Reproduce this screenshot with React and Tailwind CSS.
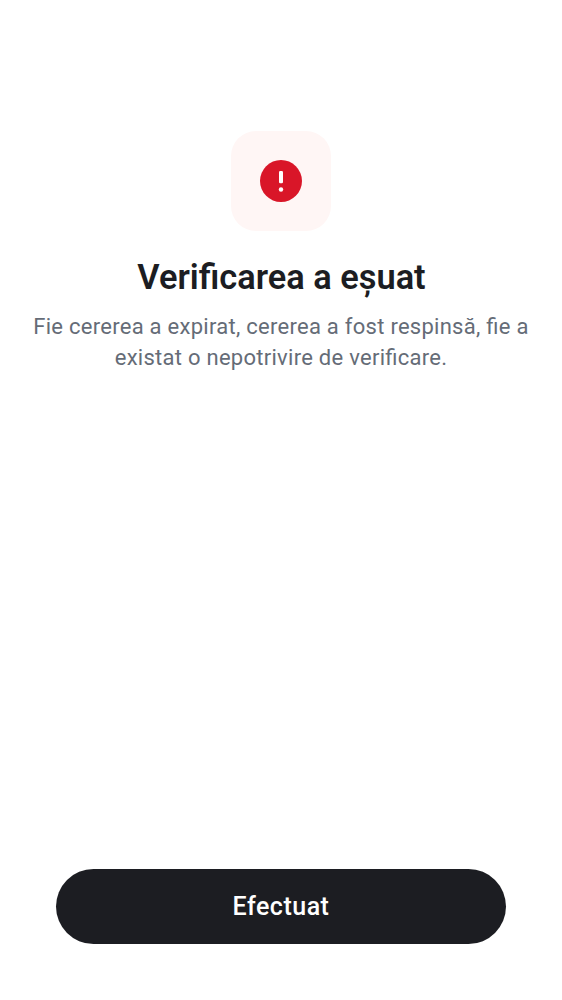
export default function App() {
  return (
    <main className="flex h-[1000px] w-[562px] flex-col items-center bg-white pt-[131px] pb-14 font-['Roboto',sans-serif]">
      <div className="flex size-[100px] items-center justify-center rounded-[25px] bg-[#fff6f5]">
        <svg className="size-[42px]" viewBox="0 0 42 42" aria-hidden="true">
          <circle cx="21" cy="21" r="21" fill="#d91628" />
          <rect x="19" y="11" width="4" height="12.3" rx="1.2" fill="white" />
          <circle cx="21" cy="29.5" r="2.2" fill="white" />
        </svg>
      </div>
      <h1 className="mt-6 pl-px text-[34.4px] leading-[44px] font-semibold whitespace-nowrap text-[#1c1d22]">Verificarea a eșuat</h1>
      <p className="mt-3 text-center text-[22px] leading-[31px] tracking-[0.27px] whitespace-nowrap text-[#656c77] [font-feature-settings:'liga'_1]">
        Fie cererea a expirat, cererea a fost respinsă, fie a
        <br />
        existat o nepotrivire de verificare.
      </p>
      <button className="mt-auto h-[75px] w-[450px] rounded-full bg-[#1c1d22] text-[25px] font-medium tracking-[0.5px] text-white">Efectuat</button>
    </main>
  );
}
